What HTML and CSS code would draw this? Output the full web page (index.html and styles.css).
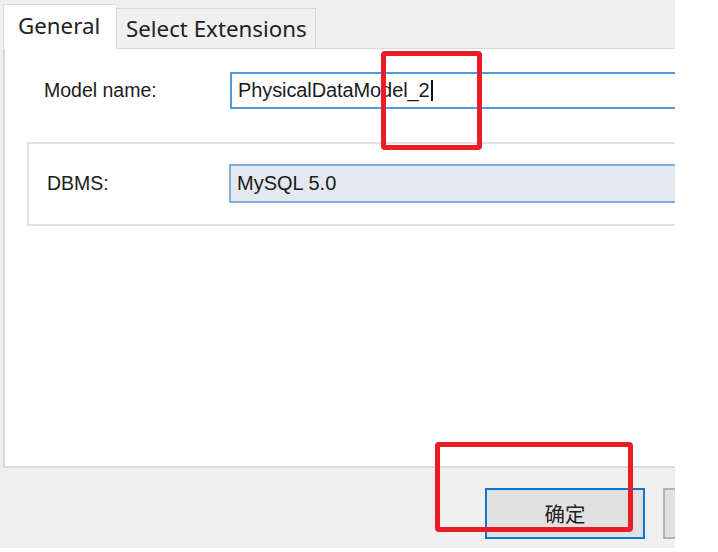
FILE: index.html
```html
<!DOCTYPE html>
<html>
<head>
<meta charset="utf-8">
<link rel="stylesheet" href="styles.css">
</head>
<body>
<div class="dialog">
  <div class="tabs">
    <div class="tab tab-active">General</div>
    <div class="tab">Select Extensions</div>
  </div>
  <div class="panel">
    <div class="row row-name">
      <div class="label">Model name:</div>
      <div class="input">PhysicalDataModel_2<span class="caret"></span></div>
    </div>
    <div class="group">
      <div class="row">
        <div class="label label-dbms">DBMS:</div>
        <div class="select">MySQL 5.0</div>
      </div>
    </div>
  </div>
  <div class="footer">
    <div class="btn btn-default">确定</div>
    <div class="btn btn-other"></div>
  </div>
  <div class="mark mark-top"></div>
  <div class="mark mark-bottom"></div>
</div>
</body>
</html>
```

FILE: styles.css
```css
html, body {
  margin: 0;
  padding: 0;
  background: #ffffff;
}

.dialog {
  position: relative;
  width: 675px;
  height: 548px;
  background: #efefef;
  overflow: hidden;
  display: flex;
  flex-direction: column;
  font-family: "Liberation Sans", Arial, "Noto Sans CJK SC", sans-serif;
  color: #1b1b1b;
}

.tabs {
  display: flex;
  align-items: flex-end;
  padding-left: 3px;
  padding-top: 4px;
  height: 48px;
  box-sizing: border-box;
  position: relative;
  z-index: 2;
  flex-shrink: 0;
}

.tab {
  font-family: "Noto Sans", "Open Sans", sans-serif;
  font-size: 22.3px;
  color: #222;
  box-sizing: border-box;
  height: 40px;
  width: 200px;
  padding-left: 9px;
  line-height: 40px;
  background: #f0f0f0;
  border: 1px solid #dadada;
  border-bottom: none;
}

.tab-active {
  width: 113px;
  height: 45px;
  margin-bottom: -1px;
  background: #ffffff;
  padding-left: 14px;
  line-height: 42px;
  border-right: none;
}

.panel {
  margin-left: 3px;
  width: 700px;
  height: 420px;
  box-sizing: border-box;
  background: #ffffff;
  border: 1px solid #dadada;
  border-width: 1px 0 2px 2px;
  padding-left: 39px;
  position: relative;
  z-index: 1;
  flex-shrink: 0;
}

.row {
  display: flex;
  align-items: center;
}

.row-name {
  margin-top: 23px;
}

.label {
  width: 186px;
  font-size: 19.5px;
  color: #1b1b1b;
  flex-shrink: 0;
}

.label-dbms {
  width: 182px;
}

.input {
  flex: 1;
  height: 37px;
  box-sizing: border-box;
  border: 2px solid #4b9ae2;
  padding-left: 6px;
  font-size: 20px;
  letter-spacing: -0.1px;
  line-height: 33px;
  color: #1b1b1b;
  white-space: nowrap;
  display: flex;
  align-items: center;
}

.caret {
  display: inline-block;
  width: 2px;
  height: 21px;
  background: #111;
  margin-left: 1px;
}

.group {
  margin-left: -17px;
  margin-top: 33px;
  height: 84px;
  box-sizing: border-box;
  border: 2px solid #e2e2e2;
  border-right: none;
  padding-left: 18px;
  padding-top: 20px;
}

.select {
  flex: 1;
  height: 39px;
  box-sizing: border-box;
  background: #e2e9f0;
  border: 2px solid #82afd9;
  border-right: none;
  padding-left: 6px;
  font-size: 20px;
  line-height: 35px;
  color: #1b1b1b;
  white-space: nowrap;
}

.footer {
  flex: 1;
  display: flex;
  align-items: flex-start;
  padding-top: 20px;
  padding-left: 485px;
  gap: 18px;
}

.btn {
  height: 51px;
  box-sizing: border-box;
  background: #e1e1e1;
  font-family: "Noto Sans CJK SC", "Noto Sans", sans-serif;
  font-size: 20.5px;
  color: #222;
  text-align: center;
  line-height: 47px;
  flex-shrink: 0;
}

.btn-default {
  width: 160px;
  border: 2px solid #0a78d4;
}

.btn-other {
  width: 160px;
  border: 2px solid #b3b3b3;
}

.mark {
  position: absolute;
  border: 5px solid #ea1c26;
  border-radius: 4px;
  box-sizing: border-box;
  z-index: 5;
}

.mark-top {
  left: 381px;
  top: 51px;
  width: 101px;
  height: 99px;
}

.mark-bottom {
  left: 435px;
  top: 442px;
  width: 198px;
  height: 90px;
}
```
